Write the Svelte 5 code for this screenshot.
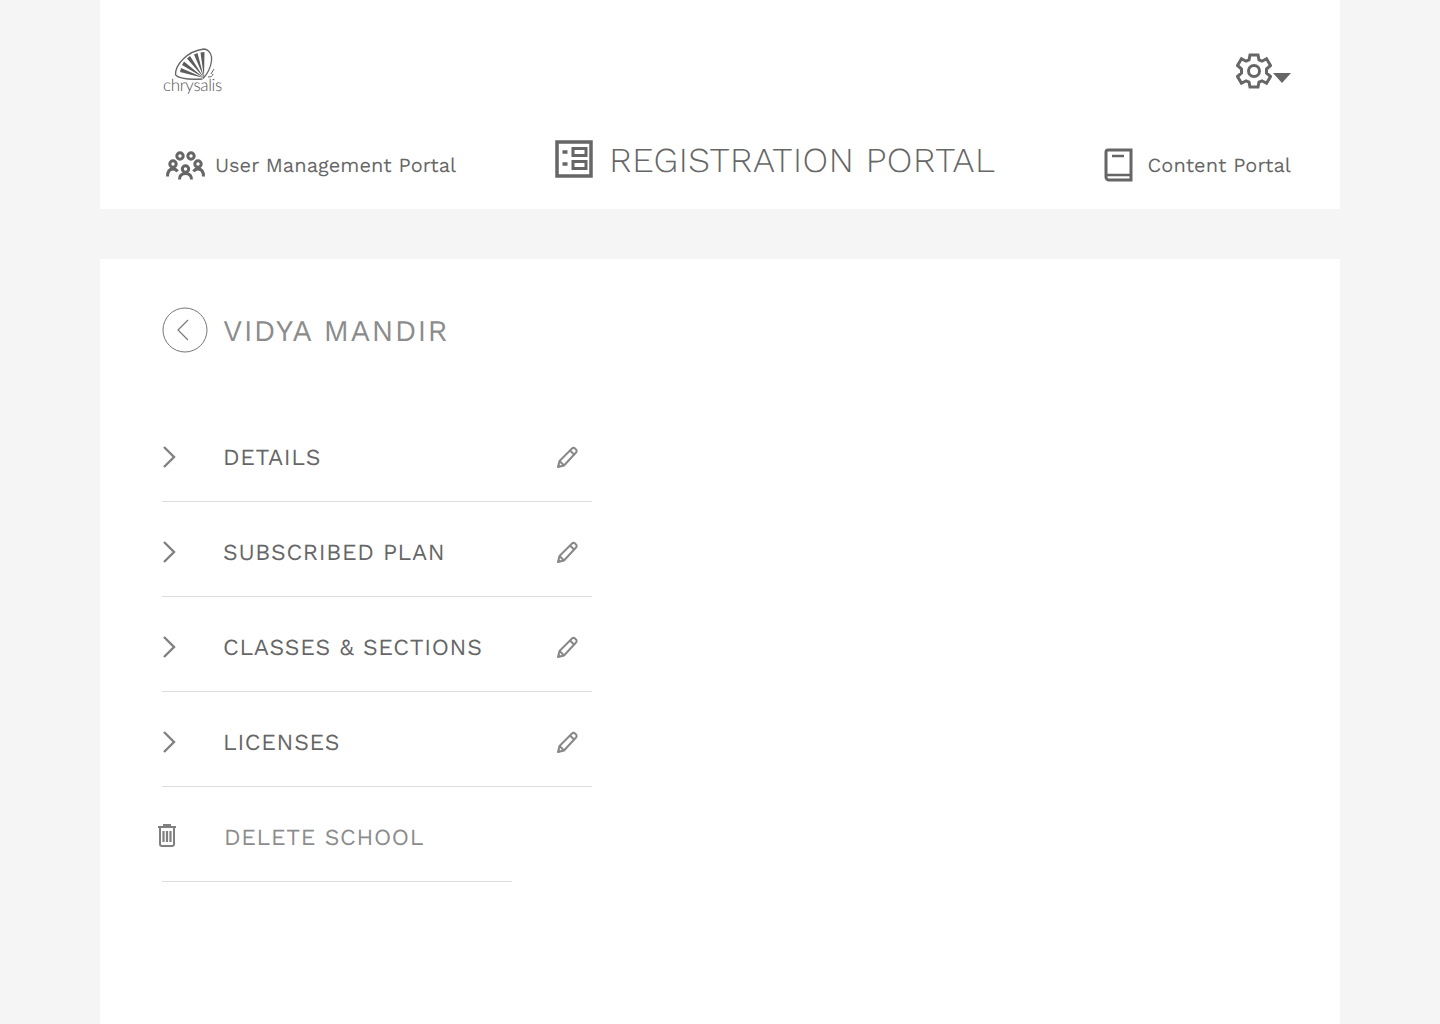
<script>
  const rows = ['DETAILS', 'SUBSCRIBED PLAN', 'CLASSES & SECTIONS', 'LICENSES'];
</script>

<div class="page">
  <header class="card head">
    <div class="top">
      <div class="logo">
        <svg class="shell" width="58" height="38" viewBox="0 0 58 38" fill="none">
          <path d="M13.500 30C13 20 25 6 42 4c6 1 8.500 7 7.500 12-1 7-4 13-8.500 17.500" stroke="#666" stroke-width="1.300"/>
          <path d="M13.500 30c3 3 10 5 27 4" stroke="#666" stroke-width="1.300"/>
          <path d="M42 33L18 27l1-4zM42 33L20 20l2-3.500zM42 33L25 13.500l3-2.500zM42 33L32 9.500l3.500-1.500zM42 33L38.500 7.500l4-.5z" fill="#5c5c5c"/>
          <path d="M46 32c3 0 5-1 5-3M49 29l3-5" stroke="#666" stroke-width="1"/>
        </svg>
        <span class="logotext">chrysalis</span>
      </div>
      <div class="settings">
        <svg class="gear" width="36" height="36" viewBox="0 0 36 36" fill="none" stroke="#666" stroke-width="3">
          <circle cx="18" cy="18" r="5.500"/>
          <path d="M14 2h8l1 5 3 1.200 4.500-2.500 4 6.800-4 3.500v4l4 3.500-4 6.800-4.500-2.500-3 1.200-1 5h-8l-1-5-3-1.200-4.500 2.500-4-6.800 4-3.500v-4l-4-3.500 4-6.800 4.500 2.500 3-1.200z" stroke-linejoin="miter"/>
        </svg>
        <span class="caret"></span>
      </div>
    </div>
    <nav class="nav">
      <div class="side users">
        <svg width="40" height="30" viewBox="0 0 40 30" fill="none" stroke="#666" stroke-width="3">
          <circle cx="15" cy="6" r="3.200"/><circle cx="26" cy="6" r="3.200"/>
          <circle cx="8" cy="14" r="3.200"/><circle cx="33" cy="14" r="3.200"/><circle cx="20.500" cy="19" r="3.200"/>
          <path d="M2.500 26.500c0-5 2-7.500 5.500-7.500 2 0 3.500.8 4.500 2.500M38.500 26.500c0-5-2-7.500-5.500-7.500-2 0-3.500.8-4.500 2.500M14.500 29.500c0-4 2.500-6 6-6s6 2 6 6"/>
        </svg>
        <span>User Management Portal</span>
      </div>
      <div class="main-title">
        <svg width="38" height="38" viewBox="0 0 38 38" fill="none" stroke="#666">
          <rect x="2" y="2" width="34" height="34" stroke-width="3.500"/>
          <path d="M7.500 12h5M7.500 24h5" stroke-width="3.500"/>
          <rect x="18" y="8.500" width="13" height="7" stroke-width="3"/>
          <rect x="18" y="21.500" width="13" height="7" stroke-width="3"/>
        </svg>
        <span>REGISTRATION PORTAL</span>
      </div>
      <div class="side content">
        <svg width="30" height="34" viewBox="0 0 30 34" fill="none" stroke="#666" stroke-width="3">
          <path d="M2 29V4a2 2 0 0 1 2-2h23v30H5a3 3 0 0 1-3-3z"/>
          <path d="M2 27h25" stroke-width="2.500"/>
          <path d="M8 8h12" stroke-width="2.500"/>
        </svg>
        <span>Content Portal</span>
      </div>
    </nav>
  </header>

  <main class="card body">
    <div class="title">
      <span class="back">
        <svg width="46" height="46" viewBox="0 0 46 46" fill="none" stroke="#777" stroke-width="1">
          <circle cx="23" cy="23" r="22"/>
          <path d="M26 13L16 23l10 10" stroke-width="1.200"/>
        </svg>
      </span>
      <h1>VIDYA MANDIR</h1>
    </div>

    <ul class="list">
      {#each rows as r}
        <li class="row">
          <svg class="chev" width="14" height="22" viewBox="0 0 14 22" fill="none" stroke="#808080" stroke-width="2.400">
            <path d="M2 1l10 10L2 21"/>
          </svg>
          <span class="label">{r}</span>
          <svg class="pencil" width="24" height="24" viewBox="0 0 24 24" fill="none" stroke="#888" stroke-width="2" stroke-linejoin="round">
            <path d="M3 21l1.500-6L17 2.500a2 2 0 0 1 3 0l1 1a2 2 0 0 1 0 3L9 19.500z"/>
            <path d="M4.500 15L9 19.500M15 4.500L19.500 9"/>
            <path d="M2.500 21.500l.8-4 3.200 3.200z" fill="#888" stroke="none"/>
          </svg>
        </li>
      {/each}
      <li class="row del">
        <svg class="trash" width="20" height="24" viewBox="0 0 20 24" fill="none" stroke="#808080" stroke-width="2">
          <path d="M1 4h18M7 4V2h6v2M3 4v17a2 2 0 0 0 2 2h10a2 2 0 0 0 2-2V4"/>
          <path d="M6.500 8v11M10 8v11M13.500 8v11" stroke-width="2.200"/>
        </svg>
        <span class="label">DELETE SCHOOL</span>
      </li>
    </ul>
  </main>
</div>

<style>
  :global(body) {
    background: #f5f5f5;
  }
  .page {
    width: 1240px;
    margin: 0 auto;
    font-family: "Work Sans", "Open Sans", "Noto Sans", sans-serif;
    color: #666;
    height: 1024px;
    overflow: hidden;
    text-rendering: geometricPrecision;
  }
  .card {
    background: #fff;
    padding: 0 49px 0 62px;
  }
  .head {
    height: 209px;
    margin-bottom: 50px;
  }
  .top {
    display: flex;
    justify-content: space-between;
    padding-top: 45px;
    height: 51px;
  }
  .logo {
    display: flex;
    flex-direction: column;
    align-items: flex-start;
    width: 60px;
    line-height: 1;
  }
  .logotext {
    font-family: "Lato", sans-serif;
    font-weight: 300;
    font-size: 17px;
    letter-spacing: -0.35px;
    color: #555;
    margin-top: -7px;
    margin-left: 1px;
  }
  .settings {
    display: flex;
    align-items: flex-start;
    padding-top: 8px;
  }
  .caret {
    width: 0;
    height: 0;
    border-left: 9px solid transparent;
    border-right: 9px solid transparent;
    border-top: 10px solid #666;
    margin-top: 20px;
    margin-left: 1px;
  }
  .nav {
    display: flex;
    justify-content: space-between;
    align-items: center;
    margin-top: 42px;
    padding-left: 3px;
  }
  .side {
    display: flex;
    align-items: center;
    font-size: 20px;
    letter-spacing: 0.05px;
    margin-top: 10px;
  }
  .users {
    gap: 10px;
  }
  .content {
    gap: 14px;
  }
  .main-title {
    display: flex;
    align-items: center;
    gap: 16px;
    font-size: 35px;
    font-weight: 300;
    letter-spacing: 0.55px;
    margin-right: 10px;
  }
  .main-title svg {
    margin-bottom: 2px;
    margin-left: 1px;
  }
  .body {
    height: 800px;
    padding-top: 48px;
  }
  .title {
    display: flex;
    align-items: center;
    gap: 15px;
  }
  .back {
    display: flex;
  }
  h1 {
    margin: 0;
    padding-top: 2px;
    font-size: 30px;
    font-weight: 400;
    color: #8c8c8c;
    letter-spacing: 1.200px;
  }
  .list {
    list-style: none;
    margin: 54px 0 0;
    padding: 0;
    width: 430px;
  }
  .row {
    height: 95px;
    box-sizing: border-box;
    border-bottom: 1px solid #ddd;
    padding-top: 6px;
    display: flex;
    align-items: center;
  }
  .chev {
    width: 14px;
    margin-right: 47px;
  }
  .label {
    flex: 1;
    font-size: 23px;
    letter-spacing: 0.65px;
    color: #666;
  }
  .pencil {
    margin-right: 13px;
    margin-top: 2px;
  }
  .del {
    width: 350px;
  }
  .del .label {
    color: #8c8c8c;
  }
  .trash {
    margin-left: -5px;
    margin-right: 47px;
    margin-top: -4px;
  }
</style>
